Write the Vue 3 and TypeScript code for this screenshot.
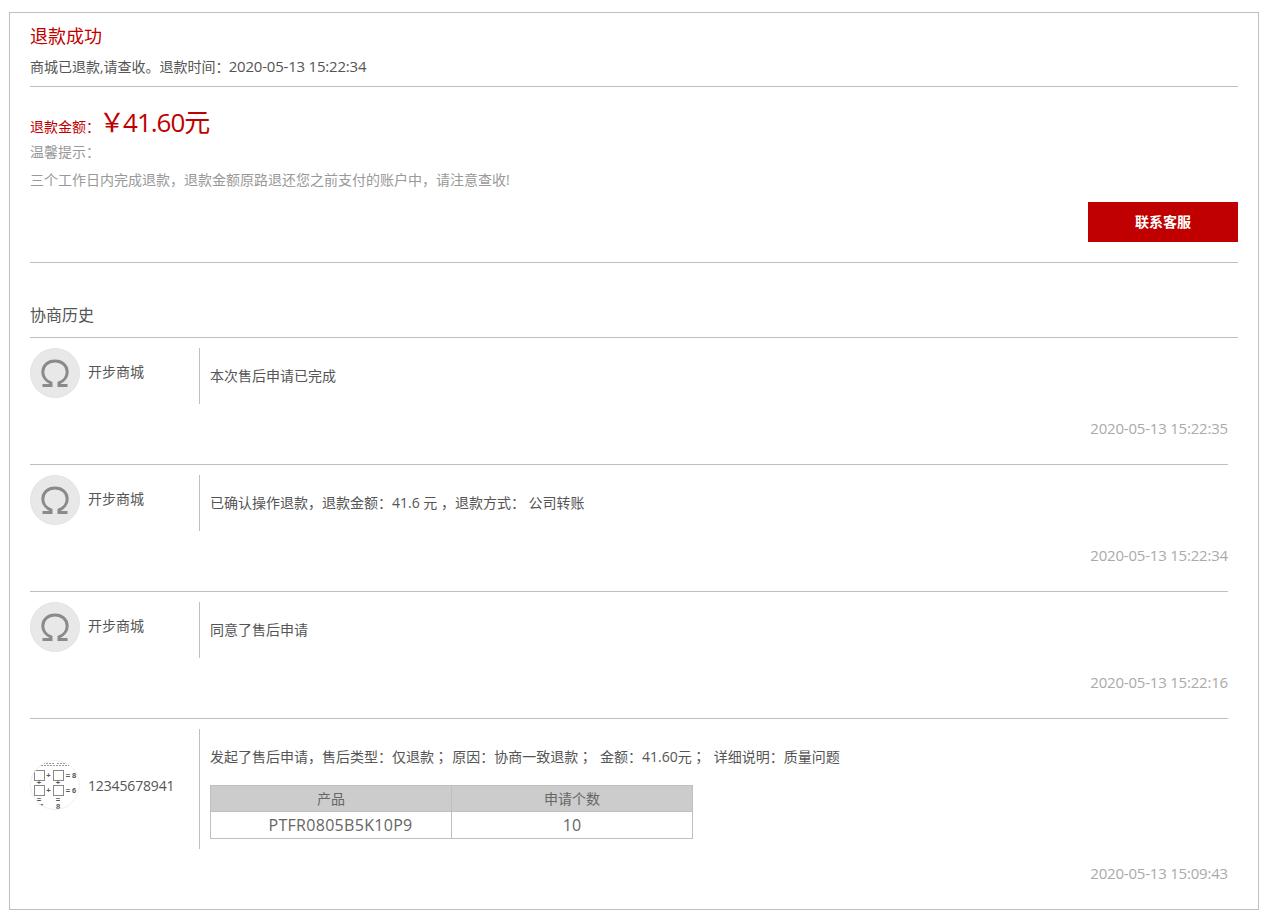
<script setup lang="ts">
interface Row {
  id: number;
  name: string;
  text: string;
  time: string;
}
const rows: Row[] = [
  { id: 1, name: '开步商城', text: '本次售后申请已完成', time: '2020-05-13 15:22:35' },
  { id: 2, name: '开步商城', text: '已确认操作退款，退款金额：41.6 元 ，退款方式： 公司转账', time: '2020-05-13 15:22:34' },
  { id: 3, name: '开步商城', text: '同意了售后申请', time: '2020-05-13 15:22:16' },
];
</script>

<template>
  <div class="page">
    <section class="box">
      <h1 class="title">退款成功</h1>
      <p class="sub">商城已退款,请查收。退款时间：<span class="date">2020-05-13 15:22:34</span></p>
      <div class="summary">
        <div class="amount">
          <span class="amount-label">退款金额：</span>
          <span class="amount-value"><span class="yen">￥</span><span class="num">41.60</span>元</span>
        </div>
        <p class="tip tip1">温馨提示：</p>
        <p class="tip tip2">三个工作日内完成退款，退款金额原路退还您之前支付的账户中，请注意查收!</p>
        <div class="actions"><button class="contact">联系客服</button></div>
      </div>
      <h2 class="history">协商历史</h2>

      <div v-for="r in rows" :key="r.id" class="entry">
        <div class="entry-main">
          <div class="who">
            <span class="avatar">
              <svg width="50" height="50" viewBox="0 0 50 50">
                <circle cx="25" cy="25" r="24.500" fill="#e8e8e8" stroke="#e2e2e2" />
                <path d="M12.500 37.500h8.500v-2.500c-5-2-8.200-6.500-8.200-11 0-6.500 5-11 12.200-11s12.200 4.500 12.200 11c0 4.500-3.200 9-8.200 11v2.500h8.500" fill="none" stroke="#8a8a8a" stroke-width="3" />
              </svg>
            </span>
            <span class="name">{{ r.name }}</span>
          </div>
          <div class="msg"><p class="msg-text">{{ r.text }}</p></div>
        </div>
        <div class="time">{{ r.time }}</div>
      </div>

      <div class="entry last">
        <div class="entry-main">
          <div class="who center">
            <span class="avatar pic">
              <svg width="50" height="50" viewBox="0 0 50 50">
                <defs><clipPath id="clip-av"><circle cx="25" cy="25" r="25" /></clipPath></defs>
                <g clip-path="url(#clip-av)">
                  <rect width="50" height="50" fill="#fff" />
                  <path d="M13 3.500h11M27 3.500h10M11 5.500h28" stroke="#999" stroke-width="1" stroke-dasharray="2 1" />
                  <g fill="none" stroke="#888" stroke-width="1">
                    <rect x="4.500" y="10.500" width="10" height="10" />
                    <rect x="23.500" y="10.500" width="10" height="10" />
                    <rect x="4.500" y="25.500" width="10" height="10" />
                    <rect x="23.500" y="25.500" width="10" height="10" />
                  </g>
                  <g fill="#555" font-size="7.500" font-weight="700" font-family="'Liberation Sans', sans-serif" text-anchor="middle">
                    <text x="18.500" y="18">+</text>
                    <text x="38" y="18">=</text>
                    <text x="44" y="18">8</text>
                    <text x="18.500" y="33">+</text>
                    <text x="38" y="33">=</text>
                    <text x="44" y="33">6</text>
                    <text x="9" y="25">+</text>
                    <text x="28" y="25">+</text>
                    <text x="9" y="42">=</text>
                    <text x="28" y="42">=</text>
                    <text x="11" y="49">7</text>
                    <text x="28" y="49">8</text>
                  </g>
                </g>
                <circle cx="25" cy="25" r="24.500" fill="none" stroke="#efefef" />
              </svg>
            </span>
            <span class="name">12345678941</span>
          </div>
          <div class="msg wide">
            <p class="msg-text">发起了售后申请，售后类型：仅退款<span class="semi">；</span> 原因：协商一致退款<span class="semi">；</span>&nbsp; 金额：41.60元<span class="semi">；</span>&nbsp; 详细说明：质量问题</p>
            <table class="goods">
              <thead>
                <tr><th>产品</th><th>申请个数</th></tr>
              </thead>
              <tbody>
                <tr><td class="sku">PTFR0805B5K10P9</td><td>10</td></tr>
              </tbody>
            </table>
          </div>
        </div>
        <div class="time">2020-05-13 15:09:43</div>
      </div>
    </section>
  </div>
</template>

<style scoped>
.page {
  padding: 12px 5px 0 9px;
  font-family: "Open Sans", "Noto Sans CJK SC", sans-serif;
  color: #555;
  font-size: 14px;
}
.box {
  box-sizing: border-box;
  height: 898px;
  border: 1px solid #bfbfbf;
  padding: 0 20px;
  overflow: hidden;
}
p, h1, h2 { margin: 0; font-weight: 400; }
.title {
  margin-top: 10px;
  height: 26px;
  line-height: 26px;
  font-size: 18px;
  color: #c00000;
}
.sub {
  margin-top: 5px;
  height: 32px;
  line-height: 24px;
  border-bottom: 1px solid #bfbfbf;
}
.date {
  font-size: 15px;
  letter-spacing: -0.2px;
  margin-left: -1px;
}
.semi { font-family: "Noto Sans CJK TC", sans-serif; margin-right: 0.6px; }
.summary {
  height: 158px;
  border-bottom: 1px solid #bfbfbf;
}
.amount {
  margin-top: 17px;
  height: 36px;
  line-height: 36px;
  color: #c00000;
  display: flex;
  align-items: baseline;
}
.amount-label { font-size: 14px; }
.amount-value { font-size: 26px; margin-left: -1px; }
.yen { letter-spacing: -2px; }
.num { letter-spacing: -1px; }
.tip { color: #999; line-height: 20px; }
.tip1 { margin-top: 2px; height: 28px; }
.tip2 { height: 22px; }
.actions {
  display: flex;
  justify-content: flex-end;
  margin-top: 10px;
}
.contact {
  box-sizing: border-box;
  width: 150px;
  height: 40px;
  border: 0;
  padding: 0 0 3px;
  background: #c00000;
  color: #fff;
  font: 700 14px "Open Sans", "Noto Sans CJK SC", sans-serif;
}
.history {
  margin-top: 40px;
  height: 34px;
  line-height: 24px;
  font-size: 16px;
  border-bottom: 1px solid #bfbfbf;
}
.entry {
  box-sizing: border-box;
  height: 127px;
  padding-top: 10px;
  margin-right: 10px;
  border-bottom: 1px solid #bfbfbf;
}
.entry.last {
  height: 170px;
  border-bottom: 0;
}
.entry-main { display: flex; }
.who {
  box-sizing: border-box;
  width: 169px;
  height: 56px;
  display: flex;
  align-items: flex-start;
}
.who.center { height: 112px; align-items: center; }
.avatar {
  width: 50px;
  height: 50px;
  display: block;
  flex: none;
}
.avatar svg { display: block; }
.name {
  margin-left: 8px;
  line-height: 20px;
  padding-top: 14px;
}
.who.center .name { padding-top: 2px; letter-spacing: -0.15px; }
.msg {
  box-sizing: border-box;
  flex: 1;
  border-left: 1px solid #bfbfbf;
  padding: 18px 0 0 10px;
  height: 56px;
}
.msg.wide { height: 120px; padding-top: 17px; }
.msg-text { line-height: 20px; }
.time {
  text-align: right;
  color: #aaa;
  line-height: 20px;
  margin-top: 14px;
  font-size: 15px;
  letter-spacing: -0.2px;
}
.goods {
  margin-top: 18px;
  width: 483px;
  border-collapse: collapse;
  table-layout: fixed;
  text-align: center;
  font-size: 14px;
  line-height: 20px;
  color: #555;
}
.goods th, .goods td {
  border: 1px solid #bfbfbf;
  padding: 0;
  font-weight: 400;
}
.goods th { height: 25px; background: #ccc; color: #666; }
.goods td { height: 26px; font-size: 16px; color: #666; }
.goods td.sku { letter-spacing: 0.3px; padding-left: 19px; }
</style>
